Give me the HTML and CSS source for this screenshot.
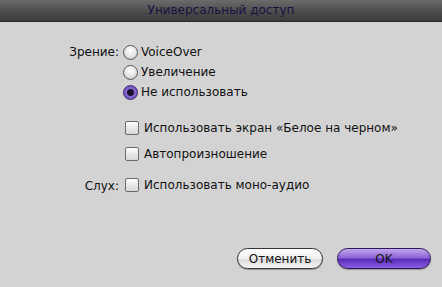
FILE: index.html
```html
<!DOCTYPE html>
<html lang="ru">
<head>
    <meta charset="utf-8" />
    <title>Универсальный доступ</title>
    <link rel="stylesheet" href="styles.css">
</head>
<body>
<div class="sheet">
    <div class="titlebar"><span class="title">Универсальный доступ</span></div>
    <div class="content">
        <div class="group">
            <div class="label">Зрение:</div>
            <div class="options">
                <div class="opt"><span class="radio"></span>VoiceOver</div>
                <div class="opt"><span class="radio"></span>Увеличение</div>
                <div class="opt"><span class="radio on"></span>Не использовать</div>
                <div class="opt spaced"><span class="check"></span>Использовать экран «Белое на черном»</div>
                <div class="opt spaced2"><span class="check"></span>Автопроизношение</div>
            </div>
        </div>
        <div class="group hearing">
            <div class="label">Слух:</div>
            <div class="options">
                <div class="opt"><span class="check"></span>Использовать моно-аудио</div>
            </div>
        </div>
    </div>
    <div class="buttons">
        <button class="btn">Отменить</button>
        <button class="btn default">OK</button>
    </div>
</div>
</body>
</html>
```

FILE: styles.css
```css
html, body {
    margin: 0; padding: 0;
    width: 442px; height: 287px; overflow: hidden;
    background-color: #d3d3d3;
}
body { font: 12px "DejaVu Sans", Arial, sans-serif; color: #111; }
.sheet { display: flex; flex-direction: column; height: 287px; }
.titlebar {
    height: 21px; line-height: 21px; text-align: center;
    background: linear-gradient(#6b6b6b, #4a4a4a 60%, #3c3c3c);
    border-bottom: 1px solid #2a2a2a;
    font-size: 12px;
}
.title { color: #1a1040; }
.content { flex: 1; padding-top: 20px; }
.group { display: flex; }
.label { width: 119px; text-align: right; padding-top: 3px; }
.options { display: flex; flex-direction: column; padding-left: 4px; }
.opt { display: flex; align-items: center; height: 20px; }
.opt.spaced { margin-top: 13px; height: 26px; }
.opt.spaced2 { height: 26px; }
.hearing { margin-top: 8px; }
.hearing .label { padding-top: 4px; }
.radio {
    width: 15px; height: 15px; border-radius: 50%;
    border: 1px solid #5a5a5a; margin-right: 3px;
    background: radial-gradient(circle at 50% 35%, #ffffff, #e6e6e6 50%, #b8b8b8);
    box-sizing: border-box;
}
.radio.on {
    background: radial-gradient(circle at 50% 50%, #1a1030 0, #1a1030 3px, #8a6ad0 4px, #5a3aa8);
    border-color: #3a2a70;
}
.check {
    width: 12px; height: 12px; margin: 0 5px 0 2px;
    border: 1px solid #6a6a6a; border-radius: 2px;
    background: linear-gradient(#ffffff, #e8e8e8 50%, #d8d8d8);
}
.buttons {
    display: flex; justify-content: flex-end; gap: 14px;
    padding: 0 11px 18px 0;
}
.btn {
    height: 21px; border-radius: 11px; border: 1px solid #333;
    font: 12px "DejaVu Sans", Arial, sans-serif; color: #111;
    background: linear-gradient(#ffffff, #f0f0f0 50%, #dcdcdc 55%, #f6f6f6);
    width: 86px; padding: 0;
    box-shadow: 0 1px 1px rgba(0,0,0,0.3);
}
.btn.default {
    width: 94px;
    background: linear-gradient(#c2a6ee, #8e66d8 45%, #5a2ebc 55%, #8a5ee0);
    border-color: #2b1a5a; color: #111;
}
```
